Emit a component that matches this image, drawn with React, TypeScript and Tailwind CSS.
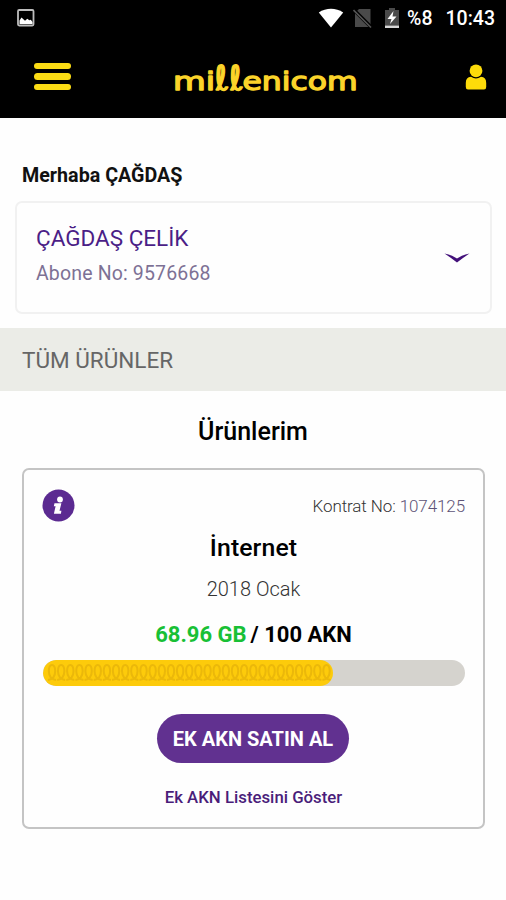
import React from "react";

function StatusBar() {
  return (
    <div className="flex h-9 items-center pl-[17px] pr-[11px] text-white">
      <svg width="18" height="18" viewBox="0 0 18 18">
        <rect x="1" y="1" width="15.5" height="15.5" rx="1.2" fill="none" stroke="#bdbdbd" strokeWidth="1.8" />
        <path d="M2.5 15V11.5L4.5 8.5l3.500 3.300 2.300-2 2 1.400 1.500-.5L15.500 13v2z" fill="#fff" />
      </svg>
      <div className="ml-auto flex items-center">
        <svg width="26" height="20" viewBox="0 0 26 20">
          <path d="M.8 4.4C8-.6 18-.6 25.2 4.4L13 19.4z" fill="#fff" />
        </svg>
        <svg className="ml-[9px]" width="20" height="22" viewBox="0 0 20 22">
          <path d="M6 2h11.5v18H2V6z" fill="#4a4a4a" />
          <path d="M1 3l17.5 17.5" stroke="#000" strokeWidth="3.5" />
          <path d="M.5 3l17.5 17.5" stroke="#555" strokeWidth="1.6" />
        </svg>
        <svg className="ml-[11px]" width="16" height="22" viewBox="0 0 16 22">
          <path d="M5 1h6v2h4v15.500H1V3h4z" fill="#4a4a4a" />
          <path d="M9.500 4L3.500 12h4l-1.500 5L12.500 9.500H8.500z" fill="#fff" />
          <rect x="1" y="18.500" width="14" height="2.500" fill="#d8d8d8" />
        </svg>
        <span className="ml-[7px] pt-px text-[19.500px] leading-none font-medium">%8</span>
        <span className="ml-[13px] pt-px text-[19.500px] leading-none font-medium">10:43</span>
      </div>
    </div>
  );
}

function Header() {
  return (
    <header className="h-[118px] bg-black">
      <StatusBar />
      <div className="flex h-20 items-center justify-between pl-[34px] pr-[19px] pt-px">
        <button aria-label="Menü" className="flex w-[37px] flex-col gap-1">
          <span className="h-[6.500px] rounded-full bg-[#fbdc14]" />
          <span className="h-[6.500px] rounded-full bg-[#fbdc14]" />
          <span className="h-[6.500px] rounded-full bg-[#fbdc14]" />
        </button>
        <svg className="mr-1" width="184" height="40" viewBox="0 0 184 40" role="img" aria-label="millenicom" fill="#fbd42a" stroke="#fbd42a" strokeWidth="1.3" strokeLinejoin="round" fontFamily="'DejaVu Sans', sans-serif">
          <text x="-1" y="32.500" fontSize="25" textLength="42" lengthAdjust="spacingAndGlyphs">mi</text>
          <text x="0" y="0" fontSize="34" textLength="29" lengthAdjust="spacingAndGlyphs" transform="translate(42.500 32.500) skewX(12)">ℓℓ</text>
          <text x="68.500" y="32.500" fontSize="25" textLength="115" lengthAdjust="spacingAndGlyphs">enicom</text>
        </svg>
        <svg width="22" height="26" viewBox="0 0 22 26" fill="#fddb0a">
          <circle cx="11" cy="6.800" r="6.400" />
          <path d="M.8 23V19Q.8 13 6 12.800Q11 16 16 12.800Q21.200 13 21.200 19V23Q21.200 25.500 19 25.500H3Q.8 25.500.8 23z" />
        </svg>
      </div>
    </header>
  );
}

function SubscriberCard() {
  return (
    <section className="ml-[15px] mr-[14px] mt-[12px] flex h-[113px] items-center justify-between rounded-[7px] border-2 border-[#f1f1f1] pl-[19px] pr-5">
      <div className="-mt-[2px]">
        <div className="text-[22.500px] leading-[35px] text-[#4b1e87]">ÇAĞDAŞ ÇELİK</div>
        <div className="text-[19.500px] leading-[36px] text-[#7d7195] tracking-[0.15px]">Abone No: 9576668</div>
      </div>
      <svg width="26" height="12" viewBox="0 0 26 12">
        <path d="M.5 1.500Q7 2.500 13 6.500Q19 2.500 25.500 1.500Q18 6.500 13 10.500Q8 6.500 .5 1.500z" fill="#43107a" />
      </svg>
    </section>
  );
}

const loops = Array.from({ length: 31 }, (_, i) => 9 + i * 9.15);

function UsageBar() {
  return (
    <div className="ml-[18.500px] mr-[18.500px] mt-[9px] h-[26px] overflow-hidden rounded-full bg-[#d5d3ce]">
      <div className="h-full w-[290px] overflow-hidden rounded-full bg-[#fdcb0b]">
        <svg width="290" height="26" viewBox="0 0 290 26" fill="none" stroke="#ebb80a" strokeWidth="2">
          {loops.map((x) => (
            <path key={x} d={`M${x - 4} 20Q${x + 3.200} 19 ${x + 3.200} 11Q${x + 3} 5 ${x} 5Q${x - 3} 5 ${x - 3.200} 11Q${x - 3} 19 ${x + 4} 20`} />
          ))}
        </svg>
      </div>
    </div>
  );
}

function ProductCard() {
  return (
    <section className="ml-[22px] mr-[21px] mt-[18px] h-[361px] rounded-[7px] border-2 border-[#c4c4c4] text-center">
      <div className="mt-[19px] flex h-[33px] items-center justify-between pl-[18px] pr-[18px]">
        <svg width="33" height="33" viewBox="0 0 33 33">
          <circle cx="16.500" cy="16.500" r="16" fill="#5b2a91" />
          <circle cx="18" cy="10.500" r="2.900" fill="#fff" />
          <path d="M12.500 14.300h6.900l-1.900 7.500h1.900l-.5 2.900h-7l1.700-7.500h-1.800z" fill="#fff" />
        </svg>
        <div className="mt-[3px] text-[17px] font-light tracking-[-0.100px] text-[#333]">
          Kontrat No: <span className="text-[#5d5377]">1074125</span>
        </div>
      </div>
      <h2 className="mt-[9px] text-[24.800px] leading-[34px] font-medium tracking-[0.100px] text-black">İnternet</h2>
      <p className="mt-[9px] text-[20px] leading-[30px] font-light text-[#333]">2018 Ocak</p>
      <p className="mt-[15px] text-[22px] leading-[32px] font-bold text-black">
        <span className="text-[#18c035]">68.96 GB</span>
        <span className="ml-1">/ 100 AKN</span>
      </p>
      <UsageBar />
      <button className="mt-7 mr-px h-[49px] w-[192px] rounded-full bg-[#613190] text-[20px] font-bold text-white">EK AKN SATIN AL</button>
      <a className="mt-[21px] block text-[16.800px] leading-[26px] font-medium text-[#4a1d7a]">Ek AKN Listesini Göster</a>
    </section>
  );
}

export default function App() {
  return (
    <main className="h-[900px] w-[506px] overflow-hidden bg-[#fefefe] font-['Roboto',sans-serif]">
      <Header />
      <h1 className="mt-[45px] pl-[22px] text-[19.700px] leading-[26px] font-bold text-[#111]">Merhaba ÇAĞDAŞ</h1>
      <SubscriberCard />
      <div className="mt-[14px] flex h-[63px] items-center bg-[#ebece7] pl-[22px] pt-[3px] text-[22.500px] text-[#666]">TÜM ÜRÜNLER</div>
      <h2 className="mt-[24px] mb-[19px] text-center text-[25px] leading-[34px] font-medium text-black">Ürünlerim</h2>
      <ProductCard />
    </main>
  );
}
